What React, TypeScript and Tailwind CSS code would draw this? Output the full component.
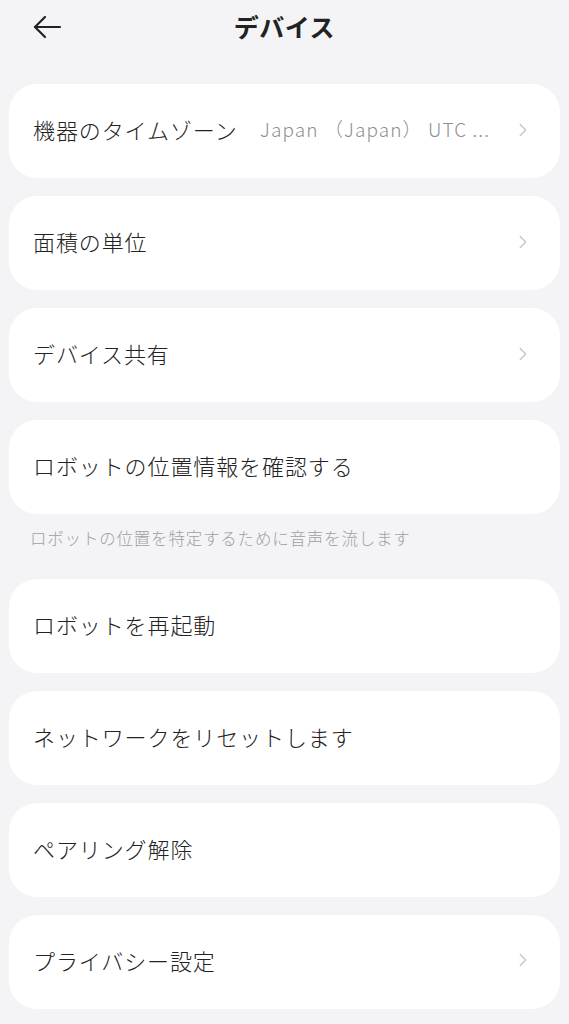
import { ChevronRight } from 'lucide-react'

type Row = {
  label: string
  value?: string
  arrow?: boolean
  note?: string
}

const rows: Row[] = [
  { label: '機器のタイムゾーン', value: 'Japan （Japan） UTC ...', arrow: true },
  { label: '面積の単位', arrow: true },
  { label: 'デバイス共有', arrow: true },
  { label: 'ロボットの位置情報を確認する', note: 'ロボットの位置を特定するために音声を流します' },
  { label: 'ロボットを再起動' },
  { label: 'ネットワークをリセットします' },
  { label: 'ペアリング解除' },
  { label: 'プライバシー設定', arrow: true },
]

export default function App() {
  return (
    <div
      className="min-h-screen w-full bg-[#f4f4f6] text-[#222]"
      style={{ fontFamily: '"Noto Sans CJK JP", "Noto Sans", sans-serif' }}
    >
      {/* header */}
      <div className="relative flex h-[54px] items-center justify-center">
        <button className="absolute left-[30px] top-[12px] text-[#222]">
          <svg width="34" height="30" viewBox="0 0 34 30" fill="none" stroke="currentColor" strokeWidth="2.2" strokeLinecap="round" strokeLinejoin="round">
            <path d="M30 15H5" />
            <path d="M15 5L5 15L15 25" />
          </svg>
        </button>
        <h1 className="text-[25px] font-bold tracking-[0.5px]">デバイス</h1>
      </div>

      <div className="flex flex-col px-[9px] pt-[30px]">
        {rows.map((r) => (
          <div key={r.label} className="mb-[18px]">
            <div className="flex h-[94px] items-center rounded-[28px] bg-white pb-[3px] pl-[24px] pr-[26px]">
              <span className="text-[22px] font-light tracking-[0.9px] whitespace-nowrap">{r.label}</span>
              <span className="flex-1" />
              {r.value && (
                <span className="mr-[22px] text-[19px] font-light tracking-[1.1px] text-[#8e8e93] whitespace-nowrap">{r.value}</span>
              )}
              {r.arrow && <ChevronRight size={22} strokeWidth={1.4} className="text-[#c4c4c8]" />}
            </div>
            {r.note && (
              <p className="mt-[12px] mb-[10px] pl-[21px] text-[16.5px] font-light text-[#a0a0a5] tracking-[0.8px]">{r.note}</p>
            )}
          </div>
        ))}
      </div>
    </div>
  )
}
